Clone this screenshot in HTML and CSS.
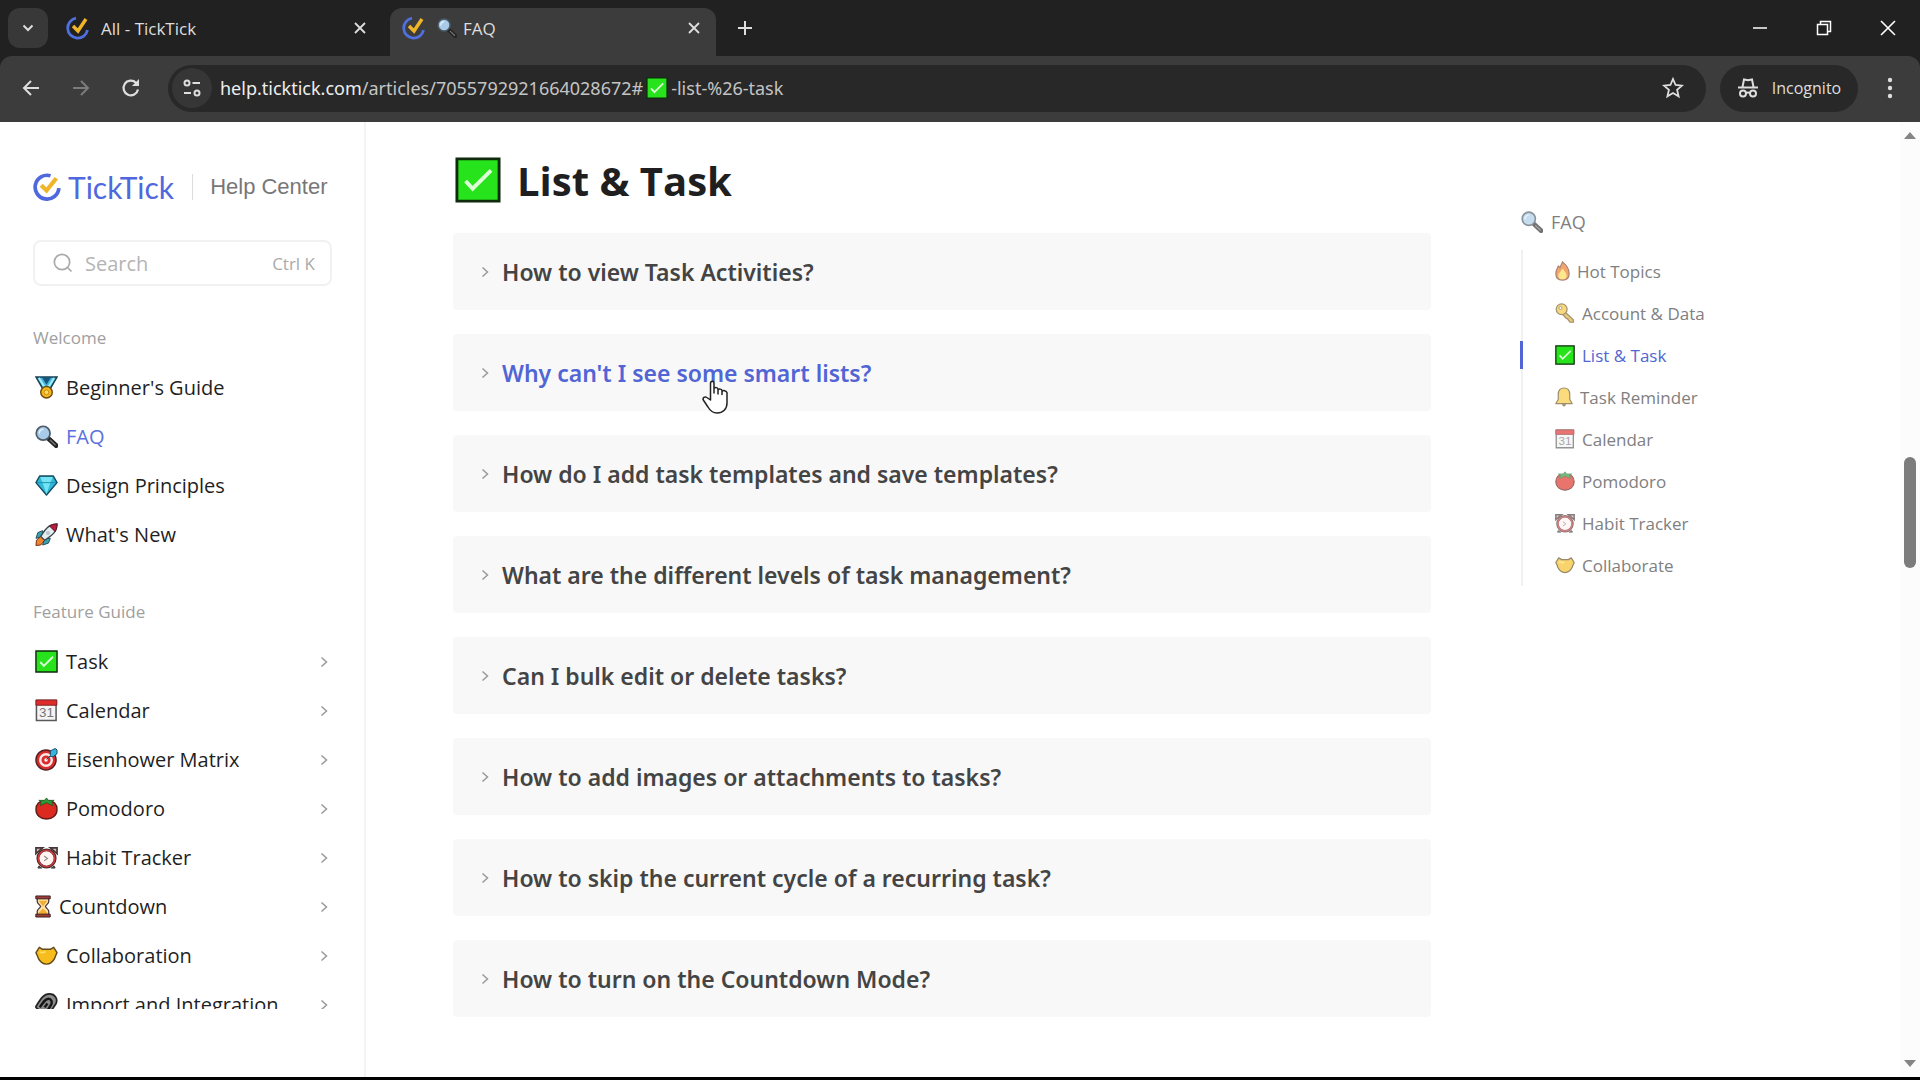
FILE: index.html
```
<!DOCTYPE html>
<html lang="en">

<head>
    <meta charset="UTF-8">
    <meta name="viewport" content="width=device-width, initial-scale=1.0">
    <title>FAQ</title>
    <link rel="stylesheet" href="styles.css">
</head>

<body>
    <!-- shared icons -->
    <svg class="sprite" aria-hidden="true">
        <symbol id="ticktick" viewBox="0 0 24 24">
            <path d="M15 2.4A10.2 10.2 0 1 0 22.2 13" fill="none" stroke="#4f68dd" stroke-width="3.2" />
            <path d="M7 10.500l4.600 4.500L20 4.500" fill="none" stroke="#f0b429" stroke-width="3.600" />
        </symbol>
        <symbol id="ticktick-tab" viewBox="0 0 24 24">
            <path d="M10 2.200A10 10 0 1 0 21.500 14" fill="none" stroke="#5070e0" stroke-width="2.800" />
            <path d="M7 10l5 5L20 3" fill="none" stroke="#f0b429" stroke-width="3.400" />
        </symbol>
        <symbol id="check" viewBox="0 0 24 24">
            <path d="M1 1h22v22H1z" fill="#26e31b" stroke="#0f2a0d" stroke-width="1.500" />
            <path d="M5.500 12.500l3.700 4L18.800 7" fill="none" stroke="#dcffd6" stroke-width="2" />
        </symbol>
        <symbol id="medal" viewBox="0 0 24 24">
            <path d="M1 1h22l-7.500 13h-7z" fill="#4cb8dd" stroke="#193f50" stroke-width="1.500" />
            <path d="M7 1h10l-5 8z" fill="#17577d" />
            <path d="M4 2l7 11M20 2l-7 11" stroke="#a2f0fa" stroke-width="2" />
            <circle cx="12" cy="17" r="6" fill="#f6b91e" stroke="#6b4c12" stroke-width="1.500" />
            <circle cx="12" cy="17" r="2.500" fill="#ffdc55" stroke="#c68616" />
        </symbol>
        <symbol id="magnifier" viewBox="0 0 24 24">
            <path d="M14 14l8 7.500" stroke="#242424" stroke-width="5" stroke-linecap="round" />
            <path d="M16 16l5 4.700" stroke="#777" stroke-width="1.500" stroke-linecap="round" />
            <circle cx="8.500" cy="8.500" r="7.200" fill="#a9cbe8" stroke="#4a5a66" stroke-width="1.800" />
            <path d="M4.500 9a4.500 4.500 0 0 1 4-4.500" fill="none" stroke="#e1f2fd" stroke-width="1.600" />
        </symbol>
        <symbol id="diamond" viewBox="0 0 24 24">
            <path d="M5 2h14l4 7-11 13L1 9z" fill="#2fb9dc" stroke="#174b5d" stroke-width="1.500" stroke-linejoin="round" />
            <path d="M5.500 3h13L16 9H8zM8 9h8l-4 12z" fill="#74e4f4" />
            <path d="M2 9h20" stroke="#1d8fae" />
        </symbol>
        <symbol id="rocket" viewBox="0 0 24 24">
            <path d="M8 8L3 10l-2 6 7-2zM16 16l-2 5-6 2 2-7z" fill="#36a2b5" stroke="#234b58" />
            <path d="M6 14l4 4-4 5-5 .5L1.500 18z" fill="#ee842b" stroke="#702d1b" />
            <path d="M23 1c-7 0-11 3-17 13l4 4C20 12 23 8 23 1z" fill="#e4edf0" stroke="#3a454b" stroke-width="1.400" />
            <path d="M23 1c-3 0-6 .8-8 2l6 6c1.300-2 2-5 2-8z" fill="#b51f3d" stroke="#5e1428" />
            <circle cx="13.500" cy="10.500" r="2.200" fill="#b9c9cf" />
        </symbol>
        <symbol id="calendar" viewBox="0 0 24 24">
            <path d="M1.500 1.500h20.500v21H1.500z" fill="#f4f4f4" stroke="#5a5a5a" stroke-width="1.600" />
            <path d="M1 1h21.800v5.500H1z" fill="#e02b2b" stroke="#7d2323" />
            <text x="12" y="19" text-anchor="middle" class="cal-day">31</text>
        </symbol>
        <symbol id="target" viewBox="0 0 24 24">
            <circle cx="11.500" cy="12.500" r="10.500" fill="#d92c2f" stroke="#542024" stroke-width="1.500" />
            <circle cx="11.500" cy="12.500" r="6" fill="none" stroke="#ffe9e5" stroke-width="2.500" />
            <circle cx="11.500" cy="12.500" r="1.800" fill="#fff" />
            <path d="M12 12l4-4V3l5-2.500L23 2v4l-4 3h-4" fill="#35b4df" stroke="#1e4a62" />
        </symbol>
        <symbol id="tomato" viewBox="0 0 24 24">
            <path d="M12 5C4 2.500 1 8 1 13c0 6 5 10 11 10s11-4 11-10c0-5-3-10.500-11-8z" fill="#dc2a20" stroke="#5b1c17" stroke-width="1.400" />
            <path d="M12 6L5.500 9l1-4L4 3.500h6L12 1l2 2.500h6L17.500 5l1 4z" fill="#2c9b36" stroke="#1c5422" stroke-width=".8" />
        </symbol>
        <symbol id="clock" viewBox="0 0 24 24">
            <path d="M4 21l-1 2h4zM20 21l1 2h-4z" fill="#555" stroke="#333" />
            <path d="M1 8V2h7zM23 8V2h-7z" fill="#c9bcbc" stroke="#4b3637" stroke-width="1.800" />
            <circle cx="12" cy="13" r="9" fill="#fff4f2" stroke="#402a2b" stroke-width="3" />
            <circle cx="12" cy="13" r="8.600" fill="none" stroke="#cc3a3c" stroke-width="1.700" />
            <path d="M9.500 10.500L13 13l-3.500 2.500" fill="none" stroke="#8c8c8c" stroke-width="1.200" />
        </symbol>
        <symbol id="hourglass" viewBox="0 0 16 24">
            <path d="M2 3h12v4c0 2-3.500 4-3.500 5S14 15 14 17v4H2v-4c0-2 3.500-4 3.500-5S2 9 2 7z" fill="#fde0a2" stroke="#443037" stroke-width="1.300" />
            <path d="M3.500 6h9L8 12zM8 14l5 5v2H3v-2z" fill="#f2ad35" />
            <path d="M.5 1h15v3H.5zM.5 20h15v3H.5z" fill="#a33b35" stroke="#3a2027" />
        </symbol>
        <symbol id="hands" viewBox="0 0 24 24">
            <path d="M1 9l3.500-5.500L8 5.500h8l3.500-2L23 9c-1 2-1.500 3-2.500 6-1.500 3-4.500 6-8.500 6s-7-3-8.500-6C2.500 12 2 11 1 9z" fill="#f7bd1d" stroke="#614b1c" stroke-width="1.500" stroke-linejoin="round" />
            <path d="M5 8c2 2 4 1 6 0" fill="none" stroke="#ffdf65" stroke-width="2" />
        </symbol>
        <symbol id="link" viewBox="0 0 24 24">
            <path d="M1 14C6 6 9 1 15 1c6 0 9 5 7 10l-8 12-5-1L1 15z" fill="#8b8b8b" stroke="#222" stroke-width="1.800" />
            <path d="M5 15c4-6 6-9 9-9s4 3 3 6l-5 8M10 15l3-4" fill="none" stroke="#161616" stroke-width="2.500" />
        </symbol>
        <symbol id="flame" viewBox="0 0 18 24">
            <path d="M9 1c5 4 8 8 8 14 0 5-3 8-8 8s-8-3-8-8c0-4 2-6 3-9l2 2c1-3 2-4 3-7z" fill="#ef7422" stroke="#77432a" stroke-width="1.400" />
            <path d="M9 9c3 4 5 6 5 9s-2 4-5 4-5-1-5-4 2-4 5-9z" fill="#ffdc4f" />
        </symbol>
        <symbol id="key" viewBox="0 0 24 24">
            <path d="M11 10l11 10v3h-4l-3-4-2-1-5-6" fill="#e6b02c" stroke="#735a25" stroke-width="1.500" />
            <circle cx="8" cy="7.500" r="6.500" fill="#f5c63a" stroke="#735a25" stroke-width="1.500" />
            <circle cx="6.500" cy="6" r="1.800" fill="#fff" stroke="#735a25" />
        </symbol>
        <symbol id="bell" viewBox="0 0 22 24">
            <path d="M9 20h4l-1 3h-2z" fill="#967029" stroke="#5f4920" />
            <path d="M11 1C6 1 4 4 4 9v6l-3 5h20l-3-5V9c0-5-2-8-7-8z" fill="#f9c937" stroke="#6a5223" stroke-width="1.500" stroke-linejoin="round" />
        </symbol>
        <symbol id="chevron" viewBox="0 0 8 12">
            <path d="M1.500 1.500L6.500 6l-5 4.500" fill="none" stroke="currentColor" stroke-width="1.500" />
        </symbol>
        <symbol id="close" viewBox="0 0 12 12">
            <path d="M1 1l10 10M11 1L1 11" stroke="currentColor" stroke-width="1.800" />
        </symbol>
    </svg>

    <header class="browser">
        <div class="tab-strip">
            <button class="tab-search" aria-label="Search tabs">
                <svg width="12" height="8" viewBox="0 0 12 8"><path d="M1.500 1.500L6 6l4.500-4.500" fill="none" stroke="currentColor" stroke-width="2" /></svg>
            </button>
            <div class="tab">
                <svg class="favicon"><use href="#ticktick-tab" /></svg>
                <span class="tab-title">All - TickTick</span>
                <button class="tab-close" aria-label="Close tab"><svg><use href="#close" /></svg></button>
            </div>
            <div class="tab active">
                <svg class="favicon"><use href="#ticktick-tab" /></svg>
                <svg class="title-icon"><use href="#magnifier" /></svg>
                <span class="tab-title">FAQ</span>
                <button class="tab-close" aria-label="Close tab"><svg><use href="#close" /></svg></button>
            </div>
            <button class="new-tab" aria-label="New tab">
                <svg width="16" height="16" viewBox="0 0 16 16"><path d="M8 1v14M1 8h14" stroke="currentColor" stroke-width="2" /></svg>
            </button>
            <div class="window-buttons">
                <button aria-label="Minimize"><svg width="14" height="14" viewBox="0 0 14 14"><path d="M0 7h14" stroke="currentColor" stroke-width="1.500" /></svg></button>
                <button aria-label="Restore"><svg width="16" height="16" viewBox="0 0 16 16"><path d="M1.500 4.500h10v10h-10zM4.500 4V1.500h10v10H12" fill="none" stroke="currentColor" stroke-width="1.500" /></svg></button>
                <button aria-label="Close"><svg width="16" height="16" viewBox="0 0 16 16"><path d="M1 1l14 14M15 1L1 15" stroke="currentColor" stroke-width="1.600" /></svg></button>
            </div>
        </div>
        <div class="toolbar">
            <button class="tool" aria-label="Back">
                <svg width="18" height="18" viewBox="0 0 18 18"><path d="M17 9H2M9 2L2 9l7 7" fill="none" stroke="currentColor" stroke-width="2" /></svg>
            </button>
            <button class="tool disabled" aria-label="Forward">
                <svg width="18" height="18" viewBox="0 0 18 18"><path d="M1 9h15M9 2l7 7-7 7" fill="none" stroke="currentColor" stroke-width="2" /></svg>
            </button>
            <button class="tool" aria-label="Reload">
                <svg width="20" height="20" viewBox="0 0 20 20"><path d="M17 11.500A7.300 7.300 0 1 1 15 4.800L17 7" fill="none" stroke="currentColor" stroke-width="2.200" /><path d="M18 1v7h-7z" fill="currentColor" /></svg>
            </button>
            <div class="omnibox">
                <button class="site-info" aria-label="Site information">
                    <svg width="20" height="20" viewBox="0 0 20 20" fill="none" stroke="currentColor" stroke-width="2"><circle cx="5" cy="5" r="2.500" /><path d="M10.500 5H18M2 15h7" /><circle cx="15" cy="15" r="2.500" /></svg>
                </button>
                <div class="url"><b>help.ticktick.com</b>/articles/7055792921664028672#<svg><use href="#check" /></svg>-list-%26-task</div>
                <button class="star" aria-label="Bookmark">
                    <svg width="22" height="22" viewBox="0 0 22 22"><path d="M11 2l2.600 6 6.400.6-4.900 4.300 1.500 6.400L11 16l-5.600 3.300 1.500-6.400L2 8.600 8.400 8z" fill="none" stroke="currentColor" stroke-width="1.800" /></svg>
                </button>
            </div>
            <button class="incognito">
                <svg width="22" height="20" viewBox="0 0 22 20"><path d="M1 9.500h20M5.500 9L7 1.500l4 .8 4-.8L16.500 9" fill="none" stroke="currentColor" stroke-width="2" /><g fill="none" stroke="currentColor" stroke-width="2"><circle cx="6" cy="15.500" r="3" /><circle cx="16" cy="15.500" r="3" /><path d="M9 15q2-1 4 0" /></g></svg>
                Incognito
            </button>
            <button class="more" aria-label="Menu">
                <svg width="6" height="22" viewBox="0 0 6 22" fill="currentColor"><circle cx="3" cy="3" r="2.200" /><circle cx="3" cy="11" r="2.200" /><circle cx="3" cy="19" r="2.200" /></svg>
            </button>
        </div>
    </header>

    <div class="page">
        <aside class="sidebar">
            <a class="brand" href="#">
                <svg><use href="#ticktick" /></svg>
                <span class="brand-name">TickTick</span>
                <span class="brand-sub">Help Center</span>
            </a>
            <label class="search">
                <svg width="20" height="20" viewBox="0 0 20 20"><circle cx="9" cy="9" r="7.700" fill="none" stroke="currentColor" stroke-width="1.700" /><path d="M14.500 14.500l4 4" stroke="currentColor" stroke-width="1.700" /></svg>
                <input type="text" placeholder="Search" aria-label="Search">
                <kbd>Ctrl K</kbd>
            </label>
            <nav class="menu">
                <h2>Welcome</h2>
                <ul>
                    <li><a href="#"><svg><use href="#medal" /></svg>Beginner's Guide</a></li>
                    <li><a class="current" href="#"><svg><use href="#magnifier" /></svg>FAQ</a></li>
                    <li><a href="#"><svg><use href="#diamond" /></svg>Design Principles</a></li>
                    <li><a href="#"><svg><use href="#rocket" /></svg>What's New</a></li>
                </ul>
                <h2>Feature Guide</h2>
                <ul>
                    <li><a href="#"><svg><use href="#check" /></svg>Task<svg class="arrow"><use href="#chevron" /></svg></a></li>
                    <li><a href="#"><svg><use href="#calendar" /></svg>Calendar<svg class="arrow"><use href="#chevron" /></svg></a></li>
                    <li><a href="#"><svg><use href="#target" /></svg>Eisenhower Matrix<svg class="arrow"><use href="#chevron" /></svg></a></li>
                    <li><a href="#"><svg><use href="#tomato" /></svg>Pomodoro<svg class="arrow"><use href="#chevron" /></svg></a></li>
                    <li><a href="#"><svg><use href="#clock" /></svg>Habit Tracker<svg class="arrow"><use href="#chevron" /></svg></a></li>
                    <li><a href="#"><svg class="narrow"><use href="#hourglass" /></svg>Countdown<svg class="arrow"><use href="#chevron" /></svg></a></li>
                    <li><a href="#"><svg><use href="#hands" /></svg>Collaboration<svg class="arrow"><use href="#chevron" /></svg></a></li>
                    <li><a href="#"><svg><use href="#link" /></svg>Import and Integration<svg class="arrow"><use href="#chevron" /></svg></a></li>
                </ul>
            </nav>
        </aside>

        <main class="content">
            <h1><svg><use href="#check" /></svg>List &amp; Task</h1>
            <div class="questions">
                <details><summary><svg><use href="#chevron" /></svg>How to view Task Activities?</summary></details>
                <details class="hovered">
                    <summary><svg><use href="#chevron" /></svg>Why can't I see some smart lists?</summary>
                </details>
                <details><summary><svg><use href="#chevron" /></svg>How do I add task templates and save templates?</summary></details>
                <details><summary><svg><use href="#chevron" /></svg>What are the different levels of task management?</summary></details>
                <details><summary><svg><use href="#chevron" /></svg>Can I bulk edit or delete tasks?</summary></details>
                <details><summary><svg><use href="#chevron" /></svg>How to add images or attachments to tasks?</summary></details>
                <details><summary><svg><use href="#chevron" /></svg>How to skip the current cycle of a recurring task?</summary></details>
                <details><summary><svg><use href="#chevron" /></svg>How to turn on the Countdown Mode?</summary></details>
                <svg class="pointer" viewBox="0 0 26 34">
                    <path d="M8.500 20V3.500C8.500 .5 12 .5 12 3.500V13V8.500c1-1.500 3.500-1 4 .5v5-4c1-1.500 3.500-1 4 .5v4-3c1-1.500 4-1 5 1V23c0 6-4 10-10 10-5 0-7-2.500-9-6L1.300 20c-1-2 1.500-4 3.500-2.500z" fill="#fff" stroke="#222" stroke-width="1.500" stroke-linejoin="round" />
                </svg>
            </div>
        </main>

        <nav class="toc">
            <a class="toc-title" href="#"><svg><use href="#magnifier" /></svg>FAQ</a>
            <ul>
                <li><a href="#"><svg class="flame"><use href="#flame" /></svg>Hot Topics</a></li>
                <li><a href="#"><svg><use href="#key" /></svg>Account &amp; Data</a></li>
                <li class="current"><a href="#"><svg><use href="#check" /></svg>List &amp; Task</a></li>
                <li><a href="#"><svg class="bell"><use href="#bell" /></svg>Task Reminder</a></li>
                <li><a href="#"><svg><use href="#calendar" /></svg>Calendar</a></li>
                <li><a href="#"><svg><use href="#tomato" /></svg>Pomodoro</a></li>
                <li><a href="#"><svg><use href="#clock" /></svg>Habit Tracker</a></li>
                <li><a href="#"><svg><use href="#hands" /></svg>Collaborate</a></li>
            </ul>
        </nav>

        <div class="scrollbar">
            <svg width="12" height="8" viewBox="0 0 12 8"><path d="M0 8l6-7 6 7z" fill="currentColor" /></svg>
            <div class="track"><div class="thumb"></div></div>
            <svg width="12" height="8" viewBox="0 0 12 8"><path d="M0 0l6 7 6-7z" fill="currentColor" /></svg>
        </div>
    </div>
</body>

</html>
```
FILE: styles.css
```
* {
    box-sizing: border-box;
}

body {
    display: flex;
    flex-direction: column;
    height: 100vh;
    margin: 0;
    overflow: hidden;
    border-bottom: 3px solid #000;
    background-color: #fff;
    font-family: "Open Sans", "Noto Sans", sans-serif;
    color: #1f1f1f;
}

a {
    color: inherit;
    text-decoration: none;
}

ul {
    list-style: none;
    margin: 0;
    padding: 0;
}

button {
    display: flex;
    align-items: center;
    justify-content: center;
    padding: 0;
    border: none;
    background: none;
    color: inherit;
    font: inherit;
}

svg {
    flex: none;
}

.sprite {
    display: none;
}

.cal-day {
    font: 14px "Liberation Sans", sans-serif;
    fill: #777;
}

/* browser frame */
.browser {
    flex: none;
    background-color: #212121;
    color: #dedede;
    font-size: 17px;
}

.tab-strip {
    display: flex;
    align-items: center;
    height: 56px;
    padding-left: 8px;
}

.tab-search {
    width: 40px;
    height: 40px;
    border-radius: 12px;
    background-color: #383838;
}

.tab {
    display: flex;
    align-items: center;
    width: 326px;
    height: 48px;
    margin-top: 8px;
    padding: 0 16px 8px 12px;
}

.tab:not(.active) {
    margin-left: 6px;
    padding-right: 14px;
    margin-right: 10px;
}

.tab.active {
    border-radius: 12px 12px 0 0;
    background-color: #3c3c3c;
}

.favicon {
    width: 24px;
    height: 24px;
    margin-right: 11px;
}

.title-icon {
    width: 20px;
    height: 20px;
    margin-right: 6px;
}

.tab-title {
    flex: 1;
}

.tab-close svg {
    width: 12px;
    height: 12px;
}

.new-tab {
    width: 40px;
    height: 40px;
    margin-left: 9px;
}

.window-buttons {
    display: flex;
    margin-left: auto;
}

.window-buttons button {
    width: 64px;
    height: 56px;
    color: #fff;
}

.toolbar {
    display: flex;
    align-items: center;
    height: 66px;
    padding: 0 24px 2px 6px;
    border-radius: 12px 12px 0 0;
    background-color: #3c3c3c;
}

.tool {
    width: 50px;
    height: 48px;
}

.disabled {
    color: #7c7c7c;
}

.omnibox {
    display: flex;
    flex: 1;
    align-items: center;
    height: 47px;
    margin-left: 12px;
    padding: 0 22px 0 4px;
    border-radius: 24px;
    background-color: #282828;
}

.site-info {
    width: 40px;
    height: 40px;
    margin-right: 8px;
    border-radius: 20px;
    background-color: #363636;
}

.url {
    display: flex;
    flex: 1;
    align-items: center;
    color: #c4c4c4;
    font-family: "Noto Sans", sans-serif;
    font-size: 18px;
}

.url b {
    color: #eee;
    font-weight: 400;
}

.url svg {
    width: 22px;
    height: 22px;
    margin: 0 3px;
}

.incognito {
    width: 138px;
    height: 47px;
    gap: 13px;
    margin: 0 26px 0 14px;
    border-radius: 24px;
    background-color: #282828;
    font-size: 16px;
}

.more {
    width: 12px;
}

/* page */
.page {
    display: grid;
    flex: 1;
    grid-template-columns: 366px minmax(0, 1fr) 379px 20px;
    min-height: 0;
}

.sidebar {
    display: flex;
    flex-direction: column;
    min-height: 0;
    padding: 48px 32px 68px 33px;
    border-right: 2px solid #f3f3f3;
}

.brand {
    display: flex;
    flex: none;
    align-items: center;
    height: 34px;
    color: #4f68dd;
}

.brand svg {
    width: 28px;
    height: 28px;
    margin-right: 7px;
}

.brand-name {
    font: 30px/32px Lato, sans-serif;
}

.brand-sub {
    margin-left: 18px;
    padding-left: 17px;
    border-left: 1px solid #ddd;
    color: #777;
    font: 22px "Liberation Sans", sans-serif;
}

.search {
    display: flex;
    flex: none;
    align-items: center;
    height: 46px;
    margin: 36px 0 38px;
    padding: 0 15px 0 18px;
    border: 2px solid #f1f1f1;
    border-radius: 8px;
    color: #aaa;
}

.search input {
    flex: 1;
    min-width: 0;
    padding: 0 0 0 12px;
    border: none;
    background: none;
    font: 20px "Open Sans", sans-serif;
}

.search input::placeholder {
    color: #b4b4b4;
}

.search kbd {
    font: 17px "Open Sans", sans-serif;
    color: #aaa;
}

.menu {
    flex: 1;
    min-height: 0;
    overflow: hidden;
}

.menu h2 {
    margin: 0 0 11px;
    color: #a0a0a0;
    font-size: 17px;
    font-weight: 400;
    line-height: 28px;
}

.menu ul {
    margin-bottom: 39px;
}

.menu a {
    display: flex;
    align-items: center;
    height: 49px;
    padding: 0 4px 0 2px;
    font-size: 20px;
}

.menu a svg {
    width: 23px;
    height: 23px;
    margin-right: 8px;
}

.menu a .narrow {
    width: 16px;
}

.menu a .arrow {
    width: 8px;
    height: 12px;
    margin: 0 0 0 auto;
    color: #999;
}

.menu .current {
    color: #5a70e0;
}

.content {
    padding: 30px 90px 0 87px;
}

h1 {
    display: flex;
    align-items: center;
    height: 56px;
    margin: 0 0 25px 2px;
    font-size: 40px;
    font-weight: 700;
}

h1 svg {
    width: 46px;
    height: 46px;
    margin-right: 16px;
}

.questions {
    position: relative;
    display: flex;
    flex-direction: column;
    gap: 24px;
}

summary {
    display: flex;
    align-items: center;
    height: 77px;
    padding-left: 28px;
    border-radius: 4px;
    background-color: #f8f8f8;
    color: #444;
    font-family: "Noto Sans", sans-serif;
    font-size: 23px;
    font-weight: 600;
}

summary svg {
    width: 8px;
    height: 12px;
    margin-right: 13px;
    color: #999;
}

.hovered summary {
    color: #5165d4;
}

.pointer {
    position: absolute;
    top: 147px;
    left: 249px;
    width: 26px;
    height: 34px;
}

.toc {
    padding-top: 84px;
    color: #808080;
    font-size: 17px;
}

.toc a {
    display: flex;
    align-items: center;
}

.toc svg {
    width: 20px;
    height: 20px;
    margin-right: 7px;
    opacity: 0.65;
}

.toc .flame {
    width: 15px;
}

.toc .bell {
    width: 18px;
}

.toc .toc-title {
    height: 32px;
    margin-bottom: 12px;
    font-size: 18px;
}

.toc .toc-title svg {
    width: 22px;
    height: 22px;
    margin-right: 8px;
}

.toc ul {
    border-left: 2px solid #f1f1f1;
}

.toc li {
    display: flex;
    align-items: center;
    height: 42px;
    padding-left: 32px;
}

.toc .current {
    position: relative;
    color: #5165d4;
}

.toc .current svg {
    opacity: 1;
}

.toc .current::before {
    content: "";
    position: absolute;
    left: -3px;
    width: 3px;
    height: 28px;
    background-color: #5165d4;
}

.scrollbar {
    display: flex;
    flex-direction: column;
    align-items: center;
    padding: 9px 0;
    background-color: #fcfcfc;
    color: #858585;
}

.track {
    display: flex;
    flex: 1;
    flex-direction: column;
}

.thumb {
    width: 12px;
    height: 12%;
    margin-top: 318px;
    border-radius: 6px;
    background-color: #7c7c7c;
}
```
